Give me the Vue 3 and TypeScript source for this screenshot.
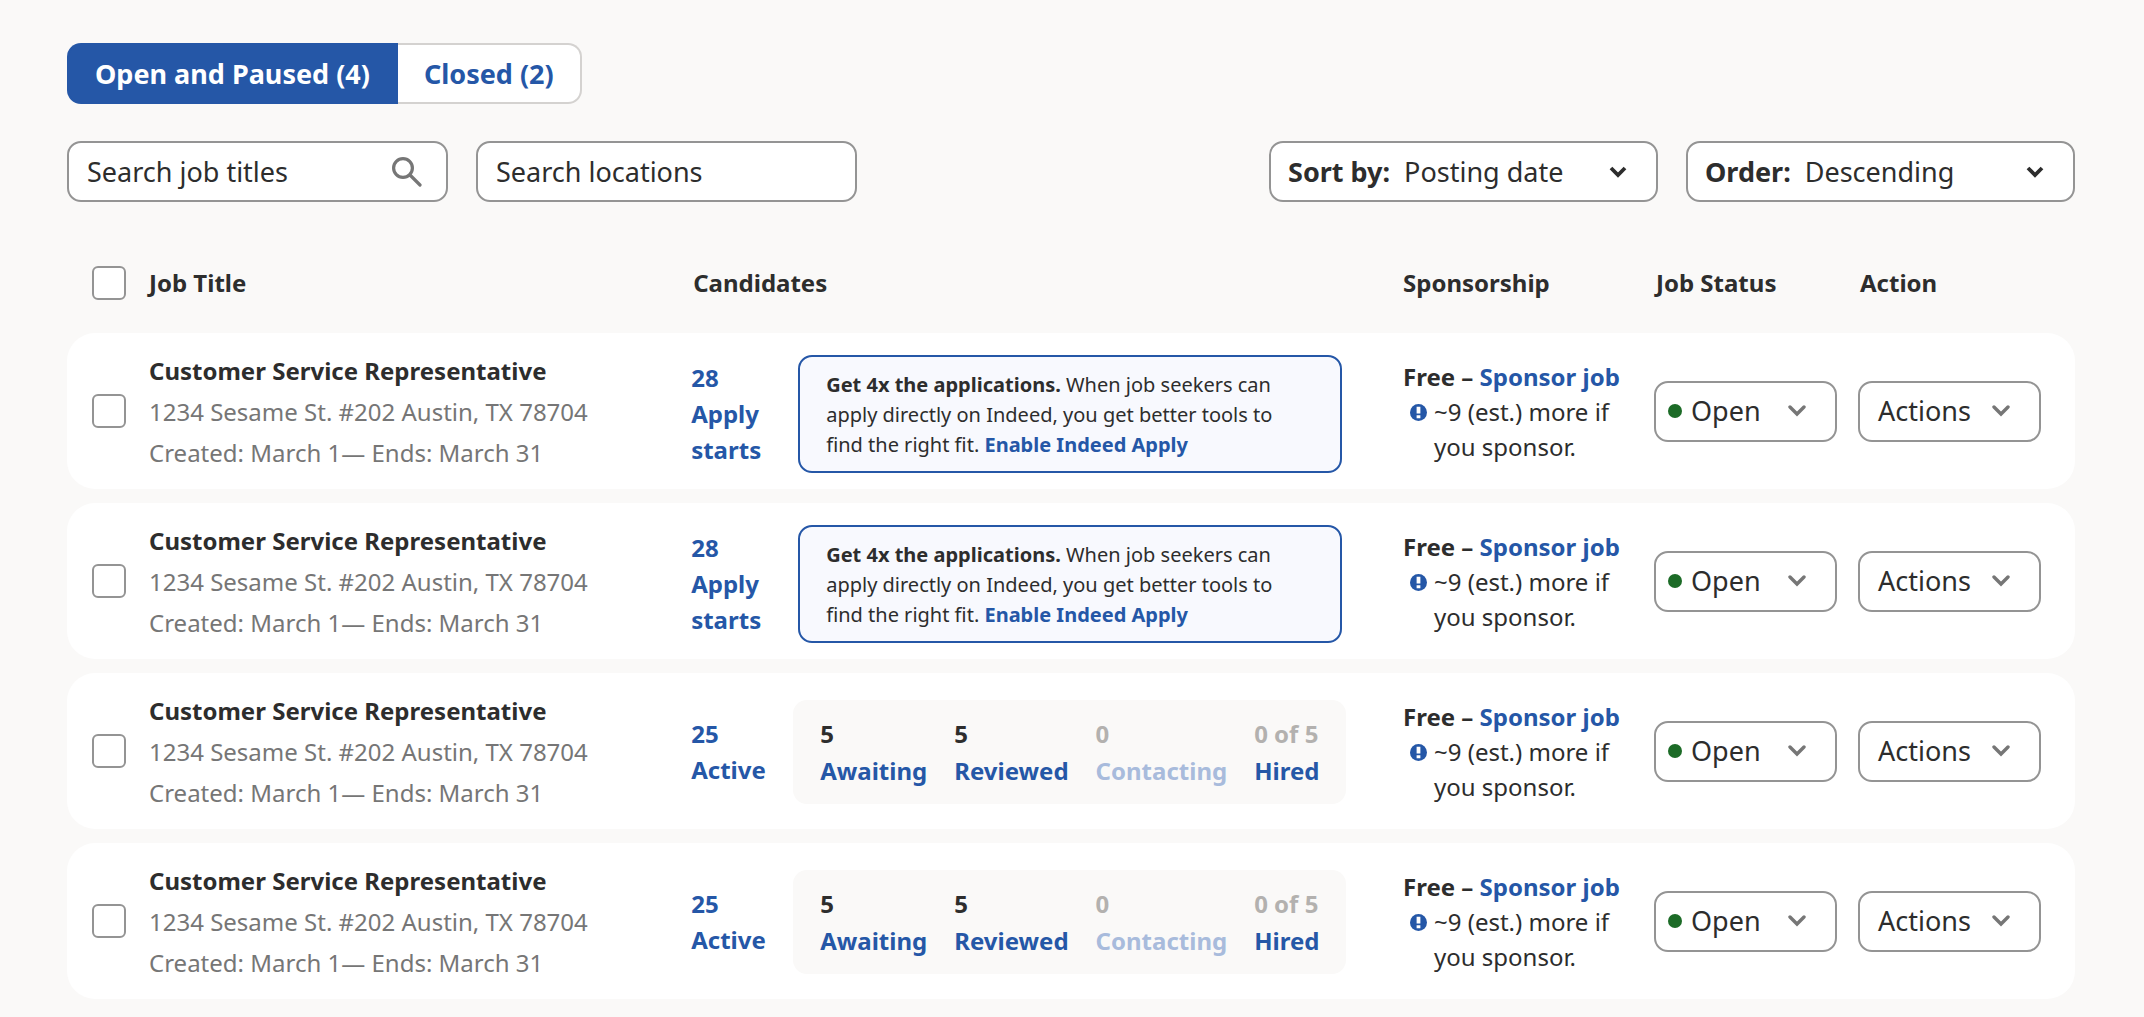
<script setup lang="ts">
import { ref } from 'vue'

interface Stat {
  value: string
  label: string
  muted?: boolean
  inactive?: boolean
}

interface Job {
  id: number
  title: string
  address: string
  dates: string
  count: string
  countLabel: string
  stats: Stat[]
  status: string
}

const stats: Stat[] = [
  { value: '5', label: 'Awaiting' },
  { value: '5', label: 'Reviewed' },
  { value: '0', label: 'Contacting', muted: true, inactive: true },
  { value: '0 of 5', label: 'Hired', muted: true },
]

const makeJob = (id: number, count: string, countLabel: string, jobStats: Stat[]): Job => ({
  id,
  title: 'Customer Service Representative',
  address: '1234 Sesame St. #202 Austin, TX 78704',
  dates: 'Created: March 1— Ends: March 31',
  count,
  countLabel,
  stats: jobStats,
  status: 'Open',
})

const jobs = ref<Job[]>([
  makeJob(1, '28', 'Apply starts', []),
  makeJob(2, '28', 'Apply starts', []),
  makeJob(3, '25', 'Active', stats),
  makeJob(4, '25', 'Active', stats),
])

const tab = ref<'open' | 'closed'>('open')
const titleQuery = ref('')
const locationQuery = ref('')
const sortBy = ref('Posting date')
const order = ref('Descending')
const selected = ref<number[]>([])

const toggleAll = (event: Event) => {
  const checked = (event.target as HTMLInputElement).checked
  selected.value = checked ? jobs.value.map((job) => job.id) : []
}
</script>

<template>
  <main class="page">
    <div class="tabs">
      <button type="button" :class="['tab', { active: tab === 'open' }]" @click="tab = 'open'">Open and Paused (4)</button>
      <button type="button" :class="['tab', { active: tab === 'closed' }]" @click="tab = 'closed'">Closed (2)</button>
    </div>

    <div class="filters">
      <div class="field search">
        <input v-model="titleQuery" type="text" placeholder="Search job titles" aria-label="Search job titles" />
        <svg class="magnifier" viewBox="0 0 30 30" aria-hidden="true">
          <circle cx="11" cy="11" r="9.4" />
          <path d="M18 18L28 28" />
        </svg>
      </div>
      <div class="field search">
        <input v-model="locationQuery" type="text" placeholder="Search locations" aria-label="Search locations" />
      </div>
      <div class="field sort first-sort">
        <label for="sort-by">Sort by:</label>
        <select id="sort-by" v-model="sortBy">
          <option>Posting date</option>
          <option>Job title</option>
        </select>
        <svg class="chevron dark" viewBox="0 0 18 12" aria-hidden="true"><path d="M2 2L9 9L16 2" /></svg>
      </div>
      <div class="field sort">
        <label for="order">Order:</label>
        <select id="order" v-model="order">
          <option>Descending</option>
          <option>Ascending</option>
        </select>
        <svg class="chevron dark" viewBox="0 0 18 12" aria-hidden="true"><path d="M2 2L9 9L16 2" /></svg>
      </div>
    </div>

    <table class="jobs">
      <colgroup>
        <col class="col-check" />
        <col class="col-job" />
        <col />
        <col class="col-sponsor" />
        <col class="col-status" />
        <col class="col-action" />
      </colgroup>
      <thead>
        <tr>
          <th class="check">
            <input type="checkbox" aria-label="Select all jobs" :checked="selected.length === jobs.length" @change="toggleAll" />
          </th>
          <th scope="col">Job Title</th>
          <th scope="col" class="inset">Candidates</th>
          <th scope="col">Sponsorship</th>
          <th scope="col" class="inset">Job Status</th>
          <th scope="col" class="inset">Action</th>
        </tr>
      </thead>
      <tbody>
        <tr v-for="job in jobs" :key="job.id">
          <td class="check">
            <input v-model="selected" type="checkbox" :value="job.id" :aria-label="`Select job ${job.id}`" />
          </td>
          <td class="job">
            <strong>{{ job.title }}</strong>
            <span>{{ job.address }}</span>
            <span>{{ job.dates }}</span>
          </td>
          <td>
            <div :class="['candidates', { promoted: !job.stats.length }]">
              <a class="count" href="#">{{ job.count }}<br />{{ job.countLabel }}</a>
              <dl v-if="job.stats.length" class="stats">
                <div v-for="stat in job.stats" :key="stat.label">
                  <dd :class="{ muted: stat.muted }">{{ stat.value }}</dd>
                  <dt><a href="#" :class="{ inactive: stat.inactive }">{{ stat.label }}</a></dt>
                </div>
              </dl>
              <p v-else class="promo">
                <strong>Get 4x the applications.</strong> When job seekers can apply directly on Indeed, you get better tools to
                find the right fit. <a href="#">Enable Indeed Apply</a>
              </p>
            </div>
          </td>
          <td class="sponsor">
            <strong>Free – <a href="#">Sponsor job</a></strong>
            <div class="hint">
              <svg viewBox="0 0 18 18" aria-hidden="true">
                <circle cx="9" cy="9" r="9" fill="#2557a7" />
                <path d="M7 3h4v7h-4zM7 12h4v3h-4z" fill="#fff" />
              </svg>
              <span>~9 (est.) more if you sponsor.</span>
            </div>
          </td>
          <td>
            <div class="control status">
              <i class="dot"></i>
              <select v-model="job.status" :aria-label="`Status of job ${job.id}`">
                <option>Open</option>
                <option>Paused</option>
                <option>Closed</option>
              </select>
              <svg class="chevron" viewBox="0 0 18 12" aria-hidden="true"><path d="M2 2L9 9L16 2" /></svg>
            </div>
          </td>
          <td>
            <button type="button" class="control" aria-haspopup="menu">
              Actions
              <svg class="chevron" viewBox="0 0 18 12" aria-hidden="true"><path d="M2 2L9 9L16 2" /></svg>
            </button>
          </td>
        </tr>
      </tbody>
    </table>
  </main>
</template>

<style>
body {
  margin: 0;
  background: #faf9f8;
}
</style>

<style scoped>
.page {
  box-sizing: border-box;
  padding: 43px 69px 4px 67px;
  color: #2d2d2d;
  font-family: 'Noto Sans', sans-serif;
  font-size: 24px;
  line-height: 36px;
}

.page *,
.page *::before {
  box-sizing: border-box;
}

button,
input,
select {
  color: inherit;
  font: inherit;
}

a {
  color: #2557a7;
  font-weight: 700;
  text-decoration: none;
}

.tabs {
  display: flex;
}

.tab {
  height: 61px;
  padding: 0 26px;
  border: 2px solid #d4d2d0;
  border-left: 0;
  border-radius: 0 14px 14px 0;
  background: #fff;
  color: #2557a7;
  font-size: 27px;
  font-weight: 700;
  cursor: pointer;
}

.tab:first-child {
  padding: 0 28px 0 26px;
  border-left: 2px solid #d4d2d0;
  border-right: 0;
  border-radius: 14px 0 0 14px;
}

.tab.active,
.tab.active:first-child {
  border-color: #2557a7;
  background: #2557a7;
  color: #fff;
}

.filters {
  display: flex;
  gap: 28px;
  margin-top: 37px;
  font-size: 27px;
}

.field {
  position: relative;
  display: flex;
  align-items: center;
  height: 61px;
  border: 2px solid #949494;
  border-radius: 14px;
  background: #fff;
}

.search {
  width: 381px;
}

.search input {
  width: 100%;
  height: 100%;
  padding: 0 18px;
  border: 0;
  border-radius: 12px;
  background: transparent;
}

.search input::placeholder {
  color: #2d2d2d;
  opacity: 1;
}

.magnifier {
  flex: none;
  width: 30px;
  height: 30px;
  margin-right: 24px;
  fill: none;
  stroke: #767676;
  stroke-width: 3.2;
  stroke-linecap: round;
}

.sort {
  width: 389px;
  padding-left: 17px;
}

.first-sort {
  margin-left: auto;
}

.sort label {
  font-weight: 700;
  white-space: nowrap;
}

select {
  flex: 1;
  min-width: 0;
  height: 100%;
  padding: 0;
  border: 0;
  background: transparent;
  appearance: none;
}

.sort select {
  padding-left: 14px;
}

.chevron {
  position: absolute;
  right: 29px;
  width: 18px;
  height: 12px;
  fill: none;
  stroke: #767676;
  stroke-width: 3.4;
  stroke-linecap: round;
  stroke-linejoin: miter;
  pointer-events: none;
}

.chevron.dark {
  stroke: #2d2d2d;
  stroke-width: 3.8;
  stroke-linecap: butt;
}

.jobs {
  width: 100%;
  margin-top: 31px;
  border-collapse: separate;
  border-spacing: 0 14px;
  table-layout: fixed;
}

.col-check {
  width: 82px;
}

.col-job {
  width: 27%;
}

.col-sponsor {
  width: 251px;
}

.col-status {
  width: 204px;
}

.col-action {
  width: 217px;
}

th,
td {
  padding: 0;
  text-align: left;
  vertical-align: middle;
}

th {
  height: 72px;
}

.inset {
  padding-left: 2px;
}

td {
  height: 156px;
  background: #fff;
}

td:first-child {
  border-radius: 28px 0 0 28px;
}

td:last-child {
  border-radius: 0 28px 28px 0;
}

.check {
  padding-left: 25px;
}

.check input {
  display: block;
  width: 34px;
  height: 34px;
  margin: 0;
  border: 2px solid #949494;
  border-radius: 6px;
  background: #fff;
  appearance: none;
}

.check input:checked {
  background: #2557a7;
}

.job {
  line-height: 41px;
}

.job strong,
.job span {
  display: block;
}

.job span {
  color: #767676;
}

.candidates {
  display: flex;
  align-items: center;
  padding-top: 2px;
}

.promoted {
  padding-top: 6px;
}

.count {
  flex: none;
  width: 102px;
  padding-right: 20px;
}

.promo {
  width: 544px;
  margin: 0 0 0 5px;
  padding: 13px 26px 11px;
  border: 2px solid #2557a7;
  border-radius: 14px;
  background: #f8f9fe;
  font-size: 20px;
  line-height: 30px;
}

.stats {
  display: flex;
  gap: 27px;
  margin: 0;
  padding: 15px 27px;
  border-radius: 14px;
  background: #faf9f8;
  line-height: 37px;
}

.stats dd {
  margin: 0;
  font-weight: 700;
}

.stats .muted {
  color: #b3b1af;
}

.stats .inactive {
  color: #a8bbdc;
}

.sponsor {
  line-height: 35px;
}

.hint {
  display: flex;
  padding: 0 36px 0 7px;
}

.hint svg {
  flex: none;
  width: 17px;
  height: 17px;
  margin: 10px 7px 0 0;
}

.control {
  position: relative;
  display: flex;
  align-items: center;
  width: 183px;
  height: 61px;
  padding: 0 18px;
  border: 2px solid #949494;
  border-radius: 14px;
  background: #fff;
  font-size: 27px;
}

.status {
  padding: 0 0 0 12px;
}

.dot {
  flex: none;
  width: 14px;
  height: 14px;
  margin-right: 9px;
  border-radius: 50%;
  background: #1c6b27;
}
</style>
